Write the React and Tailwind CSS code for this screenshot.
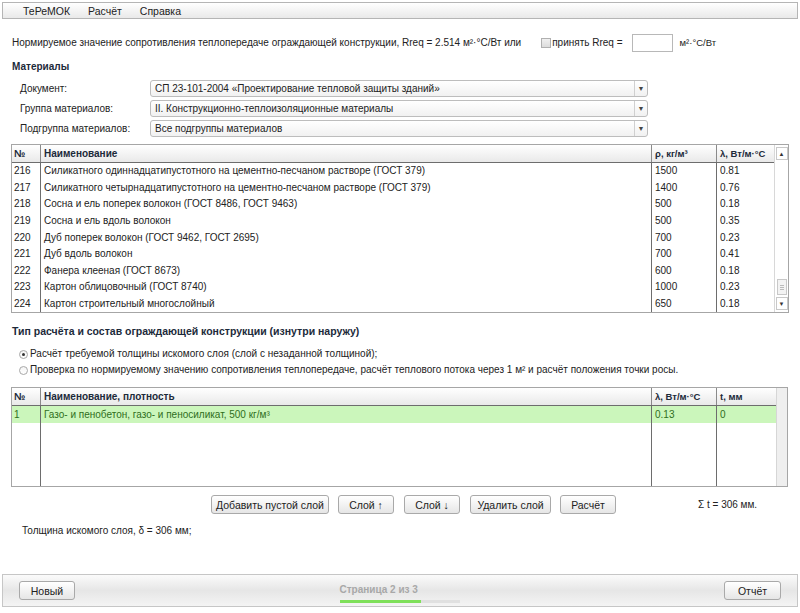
import React from 'react';

const materials = [
  ['216', 'Силикатного одиннадцатипустотного на цементно-песчаном растворе (ГОСТ 379)', '1500', '0.81'],
  ['217', 'Силикатного четырнадцатипустотного на цементно-песчаном растворе (ГОСТ 379)', '1400', '0.76'],
  ['218', 'Сосна и ель поперек волокон (ГОСТ 8486, ГОСТ 9463)', '500', '0.18'],
  ['219', 'Сосна и ель вдоль волокон', '500', '0.35'],
  ['220', 'Дуб поперек волокон (ГОСТ 9462, ГОСТ 2695)', '700', '0.23'],
  ['221', 'Дуб вдоль волокон', '700', '0.41'],
  ['222', 'Фанера клееная (ГОСТ 8673)', '600', '0.18'],
  ['223', 'Картон облицовочный (ГОСТ 8740)', '1000', '0.23'],
  ['224', 'Картон строительный многослойный', '650', '0.18'],
];

const Select = ({ value }) => (
  <div className="flex h-[17px] w-[498px] items-stretch rounded-[3px] border border-[#bdbdbd] bg-gradient-to-b from-white to-[#f1f1f1]">
    <div className="flex flex-1 items-center pl-[4px]">{value}</div>
    <div className="flex w-[13px] items-center justify-center border-l border-[#d0d0d0] text-[7px] text-[#444]">▼</div>
  </div>
);

const Button = ({ children, w }) => (
  <button
    type="button"
    className={`flex h-[19px] items-center justify-center rounded-[3px] border border-[#a9a9a9] bg-gradient-to-b from-white to-[#e6e6e6] text-[10.5px] text-[#222] ${w}`}
  >
    {children}
  </button>
);

const Radio = ({ checked }) => (
  <span className="mr-[2px] flex h-[9px] w-[9px] items-center justify-center rounded-full border border-[#a8a8a8] bg-gradient-to-b from-[#f4f4f4] to-white">
    {checked && <span className="h-[3px] w-[3px] rounded-full bg-[#333]" />}
  </span>
);

const cols1 = 'grid grid-cols-[28px_611px_65px_58px]';
const cols2 = 'grid grid-cols-[28px_611px_65px_60px]';

export default function App() {
  return (
    <div className="flex h-[613px] w-[800px] flex-col bg-white font-['Liberation_Sans',Arial,sans-serif] text-[10px] leading-[14px] text-[#222]">
      {/* menu */}
      <div className="mx-[2px] mt-[2px] flex h-[17px] items-center gap-[18px] border border-[#b5b5b5] bg-gradient-to-b from-white to-[#e9e9e9] pl-[20px] text-[10.5px]">
        <span>ТеРеМОК</span>
        <span>Расчёт</span>
        <span>Справка</span>
      </div>

      <div className="mt-[15px] flex h-[18px] items-center pl-[12px]">
        <span>Нормируемое значение сопротивления теплопередаче ограждающей конструкции, Rreq = 2.514 м²·°C/Вт или</span>
        <span className="ml-[20px] mr-[1px] h-[10px] w-[10px] border border-[#b0b0b0] bg-gradient-to-b from-[#f0f0f0] to-[#dcdcdc]" />
        <span>принять Rreq =</span>
        <span className="ml-[9px] h-[18px] w-[41px] border border-[#b8b8b8] bg-white" />
        <span className="ml-[7px] text-[9.5px]">м²·°C/Вт</span>
      </div>

      <div className="mt-[8px] pl-[12px] font-bold text-[#1c2a3a]">Материалы</div>

      <div className="mt-[6px] flex flex-col gap-[3px] pl-[20px]">
        <div className="flex items-center">
          <span className="w-[130px]">Документ:</span>
          <Select value="СП 23-101-2004 «Проектирование тепловой защиты зданий»" />
        </div>
        <div className="flex items-center">
          <span className="w-[130px]">Группа материалов:</span>
          <Select value="II. Конструкционно-теплоизоляционные материалы" />
        </div>
        <div className="flex items-center">
          <span className="w-[130px]">Подгруппа материалов:</span>
          <Select value="Все подгруппы материалов" />
        </div>
      </div>

      {/* materials table */}
      <div className="mx-[11px] mt-[7px] flex h-[169px] w-[778px] border border-[#a6a6a6]">
        <div className="flex flex-1 flex-col">
          <div className={`${cols1} h-[18px] border-b border-[#6d6d6d] bg-gradient-to-b from-white to-[#e9e9e9] font-bold text-[#1c2a3a]`}>
            <div className="flex items-center pl-[2px]">№</div>
            <div className="flex items-center border-l border-[#8a8a8a] pl-[3px]">Наименование</div>
            <div className="flex items-center border-l border-[#8a8a8a] pl-[3px] text-[9.5px]">ρ, кг/м³</div>
            <div className="flex items-center border-l border-[#8a8a8a] pl-[3px] text-[9.5px]">λ, Вт/м·°С</div>
          </div>
          <div className="flex flex-1 flex-col">
            {materials.map((r) => (
              <div key={r[0]} className={`${cols1} flex-1`}>
                <div className="flex items-center pl-[2px]">{r[0]}</div>
                <div className="flex items-center border-l border-[#6d6d6d] pl-[3px]">{r[1]}</div>
                <div className="flex items-center border-l border-[#6d6d6d] pl-[3px]">{r[2]}</div>
                <div className="flex items-center border-l border-[#6d6d6d] pl-[3px]">{r[3]}</div>
              </div>
            ))}
          </div>
        </div>
        <div className="flex w-[16px] flex-col items-center border-l border-[#d8d8d8] bg-white py-[2px]">
          <div className="flex h-[13px] w-[12px] items-center justify-center border border-[#c8c8c8] text-[6px] text-[#333]">▲</div>
          <div className="flex-1" />
          <div className="mb-[2px] flex h-[16px] w-[10px] flex-col items-center justify-center gap-[1px] border border-[#c8c8c8] bg-[#f3f3f3]">
            <span className="h-px w-[4px] bg-[#bbb]" />
            <span className="h-px w-[4px] bg-[#bbb]" />
            <span className="h-px w-[4px] bg-[#bbb]" />
          </div>
          <div className="flex h-[13px] w-[12px] items-center justify-center border border-[#c8c8c8] text-[6px] text-[#333]">▼</div>
        </div>
      </div>

      <div className="mt-[11px] pl-[12px] text-[10.5px] font-bold text-[#1c2a3a]">Тип расчёта и состав ограждающей конструкции (изнутри наружу)</div>

      <div className="mt-[9px] flex flex-col gap-[2px] pl-[19px]">
        <label className="flex items-center">
          <Radio checked />
          <span>Расчёт требуемой толщины искомого слоя (слой с незаданной толщиной);</span>
        </label>
        <label className="flex items-center">
          <Radio />
          <span>Проверка по нормируемому значению сопротивления теплопередаче, расчёт теплового потока через 1 м² и расчёт положения точки росы.</span>
        </label>
      </div>

      {/* layers table */}
      <div className="mx-[11px] mt-[10px] flex h-[100px] w-[777px] border border-[#a6a6a6]">
        <div className="flex w-[764px] flex-col">
          <div className={`${cols2} h-[18px] border-b border-[#6d6d6d] bg-gradient-to-b from-white to-[#e9e9e9] font-bold text-[#1c2a3a]`}>
            <div className="flex items-center pl-[2px]">№</div>
            <div className="flex items-center border-l border-[#8a8a8a] pl-[3px]">Наименование, плотность</div>
            <div className="flex items-center border-l border-[#8a8a8a] pl-[3px] text-[9.5px]">λ, Вт/м·°С</div>
            <div className="flex items-center border-l border-[#8a8a8a] pl-[3px] text-[9.5px]">t, мм</div>
          </div>
          <div className={`${cols2} h-[17px] bg-[#cbf6bb] text-[#2f6e1c]`}>
            <div className="flex items-center pl-[2px]">1</div>
            <div className="flex items-center border-l border-[#6d6d6d] pl-[3px]">Газо- и пенобетон, газо- и пеносиликат, 500 кг/м³</div>
            <div className="flex items-center border-l border-[#6d6d6d] pl-[3px]">0.13</div>
            <div className="flex items-center border-l border-[#6d6d6d] pl-[3px]">0</div>
          </div>
          <div className={`${cols2} flex-1`}>
            <div />
            <div className="border-l border-[#6d6d6d]" />
            <div className="border-l border-[#6d6d6d]" />
            <div className="border-l border-[#6d6d6d]" />
          </div>
        </div>
        <div className="flex-1 border-l border-[#d6d6d6] bg-[#efefef]" />
      </div>

      <div className="mt-[8px] flex items-center pl-[211px]">
        <Button w="w-[118px]">Добавить пустой слой</Button>
        <div className="ml-[9px]"><Button w="w-[56px]">Слой ↑</Button></div>
        <div className="ml-[10px]"><Button w="w-[56px]">Слой ↓</Button></div>
        <div className="ml-[10px]"><Button w="w-[81px]">Удалить слой</Button></div>
        <div className="ml-[9px]"><Button w="w-[56px]">Расчёт</Button></div>
        <span className="ml-[82px]">Σ t = 306 мм.</span>
      </div>

      <div className="mt-[10px] pl-[22px]">Толщина искомого слоя, δ = 306 мм;</div>

      {/* footer */}
      <div className="mx-[2px] mb-[6px] mt-auto flex h-[33px] items-center justify-between border border-[#c6c6c6] bg-gradient-to-b from-[#fbfbfb] via-[#e6e6e6] to-[#f4f4f4] px-[16px]">
        <Button w="w-[56px]">Новый</Button>
        <div className="flex w-[120px] flex-col pt-[4px]">
          <span className="font-bold text-[#a8a8a8]">Страница 2 из 3</span>
          <div className="mt-[3px] h-[3px] w-[120px] bg-[#e0e0e0]">
            <div className="h-[3px] w-[81px] bg-[#7fe05a]" />
          </div>
        </div>
        <Button w="w-[57px]">Отчёт</Button>
      </div>
    </div>
  );
}
